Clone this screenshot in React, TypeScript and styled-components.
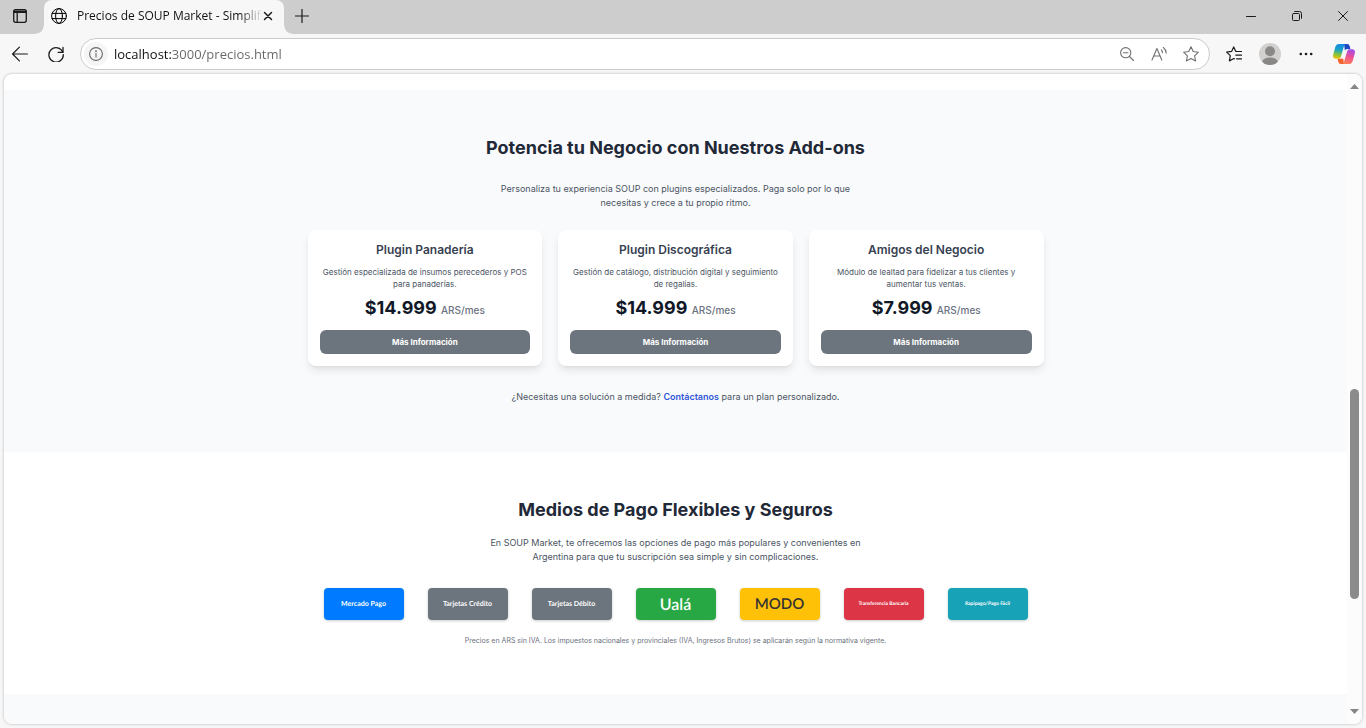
import React from "react";
import styled, { createGlobalStyle } from "styled-components";

const GlobalStyle = createGlobalStyle`
  *, *::before, *::after { box-sizing: border-box; }
  body { margin: 0; background: #f7f7f7; }
  h2, h3, p, ul { margin: 0; padding: 0; }
  button, input { font: inherit; }
`;

const uiFont = `"Open Sans", "Noto Sans", sans-serif`;
const siteFont = `Inter, "Liberation Sans", sans-serif`;

const Browser = styled.div`
  display: flex;
  flex-direction: column;
  min-height: 100vh;
  background: #f7f7f7;
  font-family: ${uiFont};
`;

/* ---------- Title bar ---------- */

const TitleBar = styled.header`
  display: flex;
  height: 34px;
  background: #cdcdcd;
`;

const IconButton = styled.button<{ $w: number }>`
  display: flex;
  align-items: center;
  justify-content: center;
  flex: none;
  width: ${(p) => p.$w}px;
  height: 32px;
  padding: 0;
  border: 0;
  background: none;
  color: #1b1b1b;
`;

const Tab = styled.div`
  position: relative;
  display: flex;
  align-items: center;
  width: 240px;
  height: 34px;
  margin-left: 4px;
  padding: 0 11px 2px 7px;
  border-radius: 8px 8px 0 0;
  background: #f7f7f7;
  &::before, &::after {
    content: "";
    position: absolute;
    bottom: 0;
    width: 8px;
    height: 8px;
  }
  &::before {
    right: 100%;
    background: radial-gradient(circle at 0 0, #cdcdcd 7px, #f7f7f7 8px);
  }
  &::after {
    left: 100%;
    background: radial-gradient(circle at 100% 0, #cdcdcd 7px, #f7f7f7 8px);
  }
`;

const TabTitle = styled.span`
  flex: 1;
  min-width: 0;
  margin-left: 10px;
  white-space: nowrap;
  font-size: 12px;
  line-height: 16px;
  color: #111;
  mask-image: linear-gradient(to right, #000 calc(100% - 24px), transparent);
`;

const Spacer = styled.div`
  flex: 1;
`;

/* ---------- Toolbar ---------- */

const Toolbar = styled.div`
  display: flex;
  align-items: center;
  height: 40px;
  padding-left: 2px;
`;

const AddressBar = styled.form`
  display: flex;
  align-items: center;
  flex: 1;
  height: 32px;
  margin: 0 8px 0 6px;
  padding: 0 2px 0 3px;
  border: 1px solid #cbcbcb;
  border-radius: 16px;
  background: #fff;
`;

const BarButton = styled(IconButton)`
  color: #707070;
`;

const SiteInfo = styled.button`
  display: flex;
  align-items: center;
  justify-content: center;
  width: 24px;
  height: 24px;
  padding: 0;
  border: 0;
  border-radius: 12px;
  background: #f5f5f5;
  color: #6a6a6a;
`;

const UrlInput = styled.input`
  flex: 1;
  min-width: 0;
  height: 24px;
  margin-left: 6px;
  padding: 0;
  border: 0;
  outline: 0;
  font-size: 13px;
  background: linear-gradient(to right, #111 58px, #666 58px);
  background-clip: text;
  color: transparent;
`;

/* ---------- Page frame ---------- */

const Frame = styled.div`
  display: flex;
  flex: 1;
  margin: 0 4px 4px;
  border-radius: 8px;
  overflow: hidden;
  background: #fff;
  box-shadow: 0 0 3px rgba(0, 0, 0, 0.28);
`;

const Page = styled.main`
  display: flex;
  flex-direction: column;
  flex: 1;
  padding-top: 16px;
  font-family: ${siteFont};
  text-align: center;
`;

const Scrollbar = styled.div`
  display: flex;
  flex-direction: column;
  align-items: center;
  width: 15px;
  padding: 10px 0;
  background: #fcfcfc;
`;

const Thumb = styled.div`
  flex: 210;
  width: 9px;
  border-radius: 5px;
  background: #8b8b8b;
`;

const Track = styled.div<{ $share: number }>`
  flex: ${(p) => p.$share};
`;

/* ---------- Site content ---------- */

const Section = styled.section<{ $tinted?: boolean }>`
  padding: 48px 16px;
  background: ${(p) => (p.$tinted ? "#f9fafc" : "#fff")};
`;

const NextSection = styled.div`
  flex: 1;
  min-height: 30px;
  background: #f9fafc;
`;

const Heading = styled.h2`
  font-size: 18px;
  line-height: 20px;
  font-weight: 700;
  color: #1f2937;
`;

const Lead = styled.p<{ $top: number }>`
  max-width: 384px;
  margin: ${(p) => p.$top}px auto 0;
  font-size: 9px;
  line-height: 14px;
  color: #4b5563;
`;

const Cards = styled.div`
  display: grid;
  grid-template-columns: repeat(3, 1fr);
  gap: 16px;
  max-width: 736px;
  margin: 20px auto 24px;
`;

const Card = styled.article`
  padding: 12px;
  border-radius: 8px;
  background: #fff;
  box-shadow: 0 5px 8px -1px rgba(0, 0, 0, 0.1), 0 2px 3px -2px rgba(0, 0, 0, 0.1);
`;

const CardTitle = styled.h3`
  font-size: 12px;
  line-height: 16px;
  font-weight: 600;
  color: #374151;
`;

const CardText = styled.p`
  margin: 8px 0 4px;
  font-size: 8px;
  line-height: 12px;
  color: #4b5563;
`;

const Price = styled.p`
  font-size: 18px;
  line-height: 28px;
  font-weight: 700;
  color: #111827;
`;

const Unit = styled.span`
  font-size: 10px;
  line-height: 12px;
  font-weight: 500;
  color: #6b7280;
`;

const MoreButton = styled.button`
  display: block;
  width: 100%;
  height: 24px;
  margin-top: 8px;
  padding: 0;
  border: 0;
  border-radius: 6px;
  background: #6c757d;
  font-size: 8px;
  font-weight: 700;
  color: #fff;
`;

const Contact = styled.p`
  font-size: 9px;
  line-height: 14px;
  color: #4b5563;
`;

const ContactLink = styled.a`
  font-weight: 600;
  color: #3056d8;
  text-decoration: none;
`;

const Methods = styled.ul`
  display: flex;
  flex-wrap: wrap;
  justify-content: center;
  gap: 24px;
  margin: 24px 0 16px;
  list-style: none;
`;

const Method = styled.li<{ $bg: string; $size: number; $ink?: string }>`
  display: flex;
  align-items: center;
  justify-content: center;
  width: 80px;
  height: 32px;
  border-radius: 4px;
  background: ${(p) => p.$bg};
  box-shadow: 0 1px 3px rgba(0, 0, 0, 0.2);
  font-family: Lato, sans-serif;
  font-size: ${(p) => p.$size}px;
  font-weight: ${(p) => (p.$size > 10 ? 600 : 700)};
  text-rendering: geometricPrecision;
  white-space: nowrap;
  color: ${(p) => p.$ink ?? "#fff"};
`;

const FinePrint = styled.p`
  font-size: 7px;
  line-height: 10px;
  color: #6b7280;
`;

/* ---------- Icons ---------- */

type GlyphProps = { size: number; width?: number; children: React.ReactNode };

const Glyph = ({ size, width = 1, children }: GlyphProps) => (
  <svg
    width={size}
    height={size}
    viewBox={`0 0 ${size} ${size}`}
    fill="none"
    stroke="currentColor"
    strokeWidth={width}
    strokeLinecap="round"
    strokeLinejoin="round"
    aria-hidden="true"
  >
    {children}
  </svg>
);

const TabActionsIcon = () => (
  <Glyph size={16} width={1.3}>
    <rect x="1.7" y="1.7" width="12.6" height="12.6" rx="2" />
    <path d="M2 3.2h12M2 4.2h12" strokeWidth="1.6" />
    <path d="M5.2 4.5v9.5" />
  </Glyph>
);

const GlobeIcon = () => (
  <Glyph size={16} width={1}>
    <circle cx="8" cy="8" r="7.4" />
    <ellipse cx="8" cy="8" rx="3.4" ry="7.4" />
    <path d="M1.2 5.4h13.6M1.2 10.6h13.6" />
  </Glyph>
);

const CloseTabIcon = () => (
  <Glyph size={10} width={1.5}>
    <path d="M1.5 1.5l7 7M8.5 1.5l-7 7" />
  </Glyph>
);

const PlusIcon = () => (
  <Glyph size={14} width={1.2}>
    <path d="M7 .5v13M.5 7h13" />
  </Glyph>
);

const MinimizeIcon = () => (
  <Glyph size={10}>
    <path d="M.5 5.5h9" />
  </Glyph>
);

const RestoreIcon = () => (
  <Glyph size={10}>
    <rect x=".5" y="2.5" width="7" height="7" rx="1" />
    <path d="M2.7 .5h4.8a2 2 0 0 1 2 2v4.8" />
  </Glyph>
);

const CloseWindowIcon = () => (
  <Glyph size={10}>
    <path d="M.5 .5l9 9M9.5 .5l-9 9" />
  </Glyph>
);

const BackIcon = () => (
  <Glyph size={16} width={1.2}>
    <path d="M15.4 8H.8M7.4 1.2L.6 8l6.8 6.8" />
  </Glyph>
);

const ReloadIcon = () => (
  <Glyph size={16} width={1.3}>
    <path d="M14.8 6.2A7.2 7.2 0 1 0 15.3 8.6" />
    <path d="M15 1.4v4.9h-4.8" />
  </Glyph>
);

const InfoIcon = () => (
  <Glyph size={14} width={1.1}>
    <circle cx="7" cy="7" r="6.4" />
    <path d="M7 6.5v3.6" />
    <circle cx="7" cy="4.3" r=".4" fill="currentColor" />
  </Glyph>
);

const ZoomOutIcon = () => (
  <Glyph size={14} width={1.1}>
    <circle cx="5.7" cy="5.7" r="5.1" />
    <path d="M9.5 9.5l4 4M3.4 5.7H8" />
  </Glyph>
);

const ReadAloudIcon = () => (
  <Glyph size={16} width={1.1}>
    <path d="M1 14L5.900 2.500l4.900 11.500M2.700 10h6.400" />
    <path d="M10.300 3.800c.8.8 1.200 1.800 1.200 3M12.300 1.500c1.800 1.300 2.800 3.200 2.900 5.600" />
  </Glyph>
);

const StarIcon = () => (
  <Glyph size={16} width={1.1}>
    <path d="M8 .8l2.200 4.700 5.200.7-3.800 3.600 1 5.200L8 12.500 3.400 15l1-5.200L.6 6.200l5.200-.7z" />
  </Glyph>
);

const FavoritesIcon = () => (
  <Glyph size={16} width={1.2}>
    <path d="M10.400 5.400h-.6L7.700.9 5.600 5.400l-5 .7 3.700 3.500-.9 5.300 4.500-2.400.6.300" />
    <path d="M10.600 5.500h4.900M9.800 9.100h5.700M10.600 12.800h4.900" />
  </Glyph>
);

const AvatarIcon = () => (
  <svg width="22" height="22" viewBox="0 0 22 22" aria-hidden="true">
    <defs>
      <clipPath id="avatar-clip">
        <circle cx="11" cy="11" r="11" />
      </clipPath>
    </defs>
    <circle cx="11" cy="11" r="11" fill="#d2d0ce" />
    <circle cx="11" cy="8.3" r="5" fill="#8a8886" />
    <ellipse cx="11" cy="18.8" rx="7.8" ry="4.4" fill="#8a8886" clipPath="url(#avatar-clip)" />
  </svg>
);

const DotsIcon = () => (
  <svg width="14" height="4" viewBox="0 0 14 4" fill="currentColor" aria-hidden="true">
    <circle cx="1.8" cy="2" r="1.3" />
    <circle cx="7" cy="2" r="1.3" />
    <circle cx="12.2" cy="2" r="1.3" />
  </svg>
);

const CopilotIcon = () => (
  <svg width="22" height="20" viewBox="0 0 22 20" aria-hidden="true">
    <defs>
      <linearGradient id="cp-left" x1="0.5" y1="0" x2="0.35" y2="1">
        <stop offset="0" stopColor="#1488e8" />
        <stop offset=".4" stopColor="#1aa3c4" />
        <stop offset=".7" stopColor="#7fc142" />
        <stop offset="1" stopColor="#f5c400" />
      </linearGradient>
      <linearGradient id="cp-right" x1="0.7" y1="0" x2="0.4" y2="1">
        <stop offset="0" stopColor="#a04cf0" />
        <stop offset=".5" stopColor="#ee4f93" />
        <stop offset="1" stopColor="#ff8052" />
      </linearGradient>
    </defs>
    <path d="M11 0h3.200c1.400 0 2 .8 2.400 2l.9 3.200h-2.700c-1.500 0-2.300.6-2.800 2.100z" fill="#1b49c4" />
    <path d="M11 20H7.800c-1.400 0-2-.8-2.400-2l-.9-3.200h2.700c1.500 0 2.300-.6 2.800-2.100z" fill="#f4622f" />
    <path d="M6.200 0h7c-1.300 0-1.900.9-2.300 2.300L8.200 12c-.6 2-1.400 2.800-3.200 2.800H2.800C.5 14.800-.4 13 .2 10.800l2.100-7.700C2.900 1 4.200 0 6.200 0z" fill="url(#cp-left)" />
    <path d="M15.800 20h-7c1.300 0 1.900-.9 2.300-2.300L13.800 8c.6-2 1.400-2.800 3.200-2.800h2.200c2.300 0 3.200 1.800 2.600 4l-2.100 7.700c-.6 2.100-1.900 3.100-3.900 3.100z" fill="url(#cp-right)" />
    <path d="M11.600 7.200c.4-1.300 1.100-2 2.500-2h2c-1.300.2-1.900 1.100-2.300 2.600l-1.500 5.200c-.4 1.300-1.200 1.800-2.500 1.800H8c.9-.3 1.500-1.300 1.900-2.600z" fill="#f7f7f7" />
  </svg>
);

const ScrollArrow = ({ down }: { down?: boolean }) => (
  <svg width="9" height="5" viewBox="0 0 9 5" aria-hidden="true">
    <path d={down ? "M0 0h9L4.500 5z" : "M0 5h9L4.500 0z"} fill="#858585" />
  </svg>
);

/* ---------- Data ---------- */

const plugins = [
  {
    name: "Plugin Panadería",
    text: "Gestión especializada de insumos perecederos y POS para panaderías.",
    price: "$14.999",
  },
  {
    name: "Plugin Discográfica",
    text: "Gestión de catálogo, distribución digital y seguimiento de regalías.",
    price: "$14.999",
  },
  {
    name: "Amigos del Negocio",
    text: "Módulo de lealtad para fidelizar a tus clientes y aumentar tus ventas.",
    price: "$7.999",
  },
];

const methods = [
  { name: "Mercado Pago", bg: "#007bff", size: 7 },
  { name: "Tarjetas Crédito", bg: "#6c757d", size: 7 },
  { name: "Tarjetas Débito", bg: "#6c757d", size: 7 },
  { name: "Ualá", bg: "#28a745", size: 16 },
  { name: "MODO", bg: "#ffc107", size: 15, ink: "#333" },
  { name: "Transferencia Bancaria", bg: "#dc3545", size: 5 },
  { name: "Rapipago/Pago Fácil", bg: "#17a2b8", size: 5 },
];

export default function App() {
  return (
    <Browser>
      <GlobalStyle />
      <TitleBar>
        <IconButton $w={40} aria-label="Menú de pestañas"><TabActionsIcon /></IconButton>
        <Tab>
          <GlobeIcon />
          <TabTitle>Precios de SOUP Market - Simplifi</TabTitle>
          <IconButton $w={10} aria-label="Cerrar pestaña"><CloseTabIcon /></IconButton>
        </Tab>
        <IconButton $w={36} aria-label="Nueva pestaña"><PlusIcon /></IconButton>
        <Spacer />
        <IconButton $w={46} aria-label="Minimizar"><MinimizeIcon /></IconButton>
        <IconButton $w={46} aria-label="Restaurar"><RestoreIcon /></IconButton>
        <IconButton $w={46} aria-label="Cerrar"><CloseWindowIcon /></IconButton>
      </TitleBar>

      <Toolbar>
        <IconButton $w={36} aria-label="Atrás"><BackIcon /></IconButton>
        <IconButton $w={36} aria-label="Actualizar"><ReloadIcon /></IconButton>
        <AddressBar onSubmit={(e) => e.preventDefault()}>
          <SiteInfo type="button" aria-label="Información del sitio"><InfoIcon /></SiteInfo>
          <UrlInput aria-label="Dirección" defaultValue="localhost:3000/precios.html" />
          <BarButton type="button" $w={32} aria-label="Alejar"><ZoomOutIcon /></BarButton>
          <BarButton type="button" $w={32} aria-label="Leer en voz alta"><ReadAloudIcon /></BarButton>
          <BarButton type="button" $w={32} aria-label="Agregar a favoritos"><StarIcon /></BarButton>
        </AddressBar>
        <IconButton $w={32} aria-label="Favoritos"><FavoritesIcon /></IconButton>
        <IconButton $w={40} aria-label="Perfil"><AvatarIcon /></IconButton>
        <IconButton $w={32} aria-label="Más opciones"><DotsIcon /></IconButton>
        <IconButton $w={44} aria-label="Copilot"><CopilotIcon /></IconButton>
      </Toolbar>

      <Frame>
        <Page>
          <Section $tinted>
            <Heading>Potencia tu Negocio con Nuestros Add-ons</Heading>
            <Lead $top={24}>
              Personaliza tu experiencia SOUP con plugins especializados. Paga solo por lo que
              necesitas y crece a tu propio ritmo.
            </Lead>
            <Cards>
              {plugins.map((p) => (
                <Card key={p.name}>
                  <CardTitle>{p.name}</CardTitle>
                  <CardText>{p.text}</CardText>
                  <Price>
                    {p.price} <Unit>ARS/mes</Unit>
                  </Price>
                  <MoreButton>Más Información</MoreButton>
                </Card>
              ))}
            </Cards>
            <Contact>
              ¿Necesitas una solución a medida? <ContactLink href="#contacto">Contáctanos</ContactLink> para
              un plan personalizado.
            </Contact>
          </Section>

          <Section>
            <Heading>Medios de Pago Flexibles y Seguros</Heading>
            <Lead $top={16}>
              En SOUP Market, te ofrecemos las opciones de pago más populares y convenientes en
              Argentina para que tu suscripción sea simple y sin complicaciones.
            </Lead>
            <Methods>
              {methods.map((m) => (
                <Method key={m.name} $bg={m.bg} $size={m.size} $ink={m.ink}>{m.name}</Method>
              ))}
            </Methods>
            <FinePrint>
              Precios en ARS sin IVA. Los impuestos nacionales y provinciales (IVA, Ingresos Brutos) se
              aplicarán según la normativa vigente.
            </FinePrint>
          </Section>
          <NextSection />
        </Page>
        <Scrollbar aria-hidden="true">
          <ScrollArrow />
          <Track $share={300} />
          <Thumb />
          <Track $share={110} />
          <ScrollArrow down />
        </Scrollbar>
      </Frame>
    </Browser>
  );
}
